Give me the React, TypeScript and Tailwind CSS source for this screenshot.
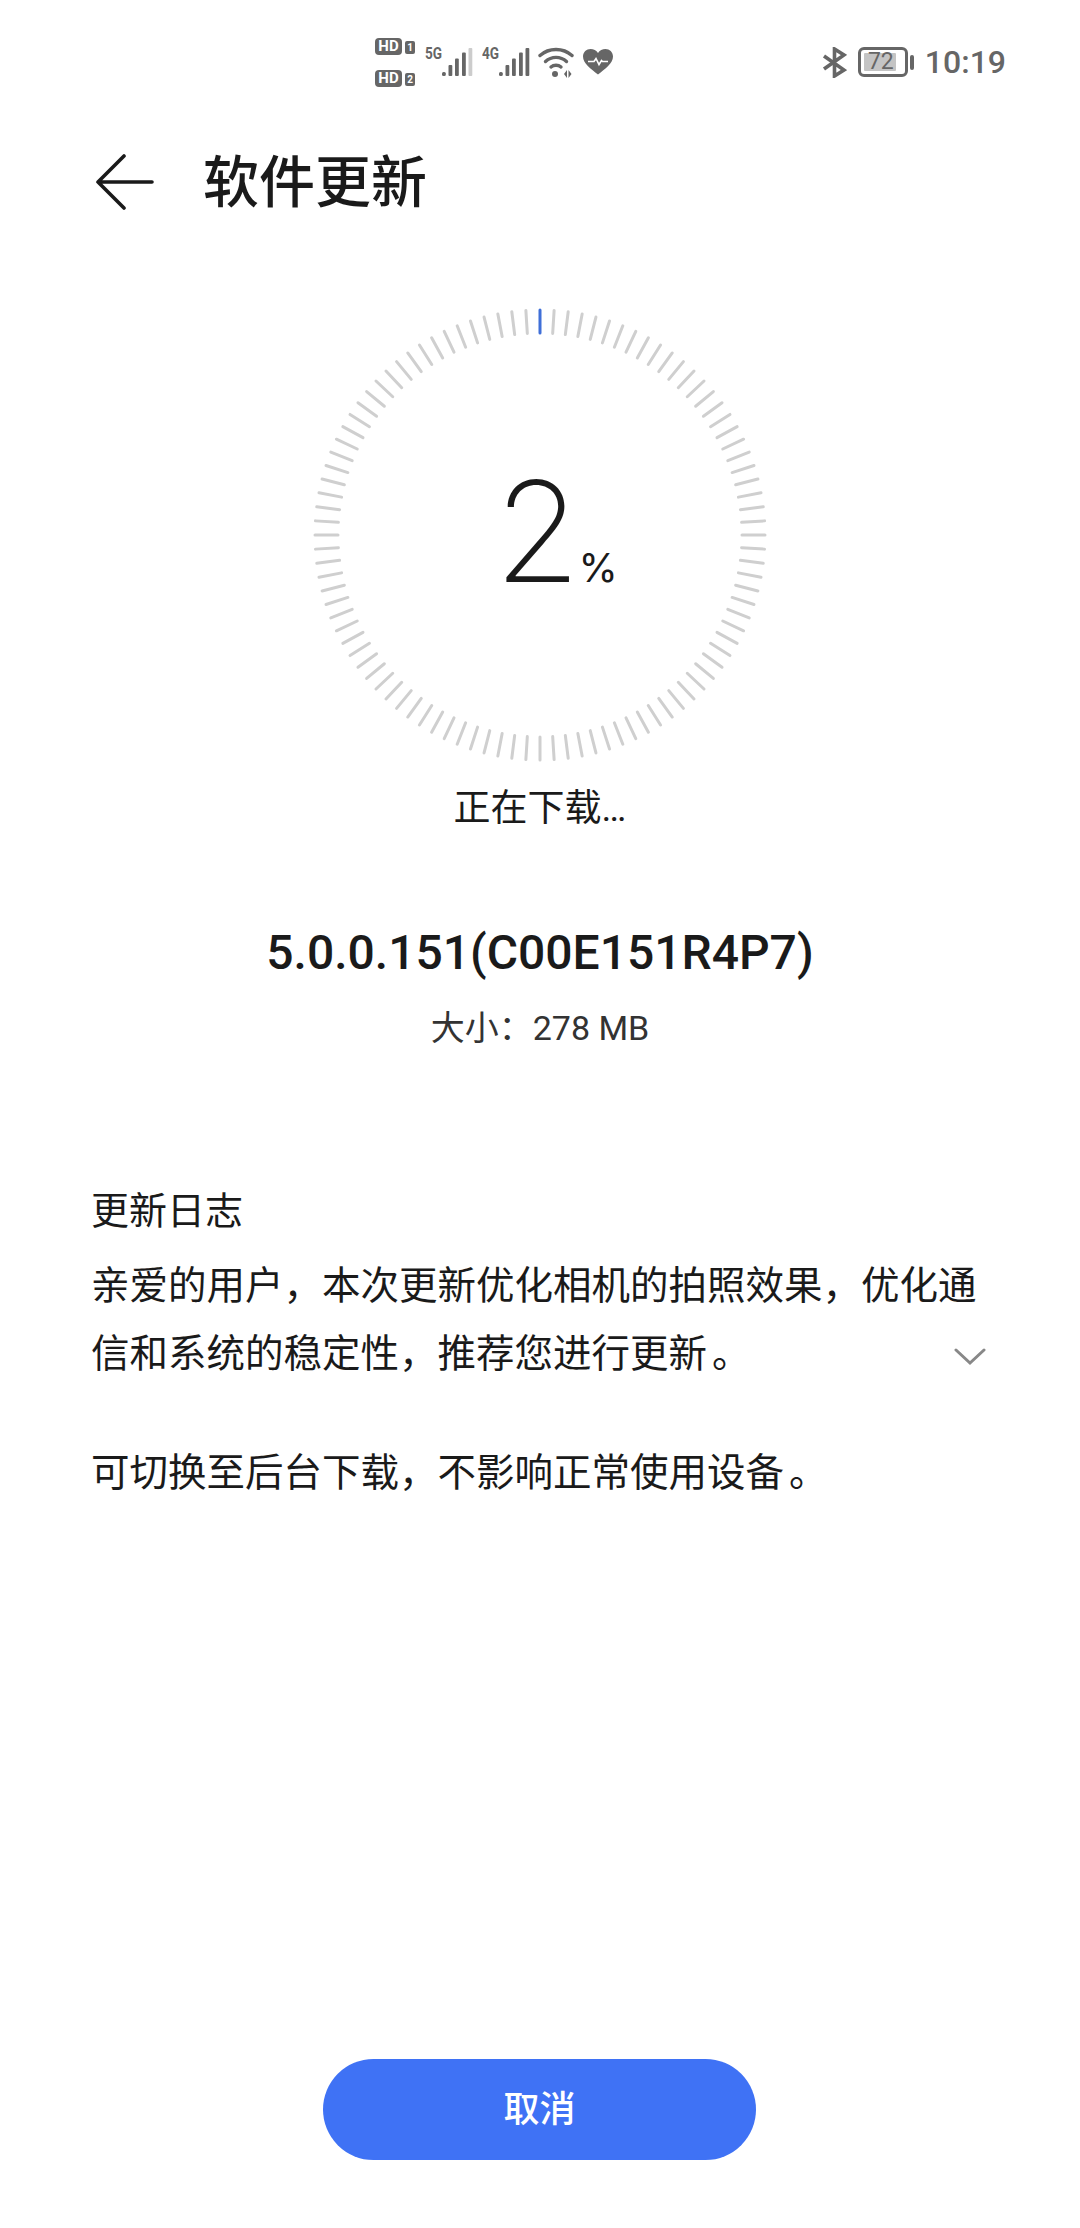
import React from "react";

const CJK = "font-['Roboto','Noto_Sans_CJK_SC',sans-serif]";

function HdBadge({ n }: { n: string }) {
  return (
    <div className="flex items-center gap-[3px] h-[17px]">
      <span className="w-[27px] h-[17px] rounded-[4px] bg-[#666] text-white text-[15px] leading-[17px] font-bold text-center">HD</span>
      <span className="w-[10px] h-[13px] mt-[3px] rounded-[2px] bg-[#666] text-white text-[10px] leading-[13px] font-bold text-center">{n}</span>
    </div>
  );
}

function Signal({ label, dim }: { label: string; dim?: boolean }) {
  return (
    <div className="flex items-start w-[49px] h-[30px]">
      <span className="w-[17px] mt-[-1px] text-[#666] text-[16px] leading-[16px] font-bold scale-x-[0.85] origin-left">{label}</span>
      <svg width="32" height="30" viewBox="0 0 32 30" className="ml-[-1px]">
        <rect x="1" y="25" width="3.8" height="4" rx="1.5" fill="#666" />
        <rect x="7.5" y="18" width="3.8" height="11" rx="1" fill="#666" />
        <rect x="14" y="11.5" width="3.8" height="17.5" rx="1" fill="#666" />
        <rect x="21" y="5.5" width="3.8" height="23.5" rx="1" fill="#666" />
        <rect x="27.5" y="1" width="3.8" height="28" rx="1" fill={dim ? "#ccc" : "#666"} />
      </svg>
    </div>
  );
}

function StatusBar() {
  return (
    <div className="flex items-center h-[62px] mt-[31px] text-[#666]">
      <div className="ml-[375px] flex flex-col gap-[15px]">
        <HdBadge n="1" />
        <HdBadge n="2" />
      </div>
      <div className="ml-[10px]"><Signal label="5G" dim /></div>
      <div className="ml-[8px]"><Signal label="4G" /></div>
      <svg width="36" height="32" viewBox="0 0 36 32" className="ml-[7px]" fill="none">
        <path d="M2 9.5C11 1.5 25 1.5 34 9.5" stroke="#666" strokeWidth="3.4" strokeLinecap="round" />
        <path d="M7.5 15.5C13.5 10 22.5 10 28.5 15.5" stroke="#666" strokeWidth="3.4" strokeLinecap="round" />
        <path d="M13 21C15.8 18.6 20.2 18.6 23 21" stroke="#666" strokeWidth="3.4" strokeLinecap="round" />
        <circle cx="17" cy="28" r="3" fill="#666" />
        <path d="M26 28l3-4v8zM30.5 24l3 4-3 4z" fill="#666" />
      </svg>
      <svg width="30" height="26" viewBox="0 0 30 26" className="ml-[9px]">
        <path d="M15 25.5C8 20 0 14.5 0 7.5 0 3 3.500 0 7.500 0 10.500 0 13.500 1.500 15 4 16.500 1.500 19.500 0 22.500 0 26.500 0 30 3 30 7.500 30 14.500 22 20 15 25.500Z" fill="#666" />
        <path d="M5 12.500h6l2-3 3 6 2.500-4 1 1H25" fill="none" stroke="#fff" strokeWidth="1.600" />
      </svg>
      <div className="ml-auto mr-[74px] flex items-center">
        <svg width="25" height="31" viewBox="0 0 25 31" fill="none" stroke="#666" strokeWidth="3.6">
          <path d="M2 9l20 14-9.500 6V2l9.500 6L2 22" />
        </svg>
        <div className="ml-[11px] w-[50px] h-[30px] rounded-[6px] border-[3px] border-[#666] p-[3px] relative">
          <div className="w-[32px] h-full bg-[#c4c4c4] rounded-[1px]" />
          <span className="absolute left-0 right-[4px] top-0 text-center text-[#666] text-[23px] leading-[24px]">72</span>
        </div>
        <div className="ml-[2px] w-[4px] h-[15px] bg-[#666] rounded-[2px]" />
        <span className="ml-[11px] text-[#666] text-[32px] leading-none font-medium">10:19</span>
      </div>
    </div>
  );
}

function Dial() {
  const ticks = Array.from({ length: 100 }, (_, i) => i);
  return (
    <div className="relative w-[454px] h-[454px] mt-[85px]">
      <svg width="454" height="454" viewBox="-227 -227 454 454">
        {ticks.map((i) => (
          <line
            key={i}
            x1="0"
            y1="-225"
            x2="0"
            y2="-202"
            stroke={i === 0 ? "#3f6fd8" : "#cfcfcf"}
            strokeWidth="3"
            strokeLinecap="round"
            transform={`rotate(${i * 3.6})`}
          />
        ))}
      </svg>
      <div className="absolute inset-0 flex items-center justify-center">
        <div className="flex items-baseline translate-x-[16px] translate-y-[-4px] font-['Inter',sans-serif] text-[#1a1a1a]">
          <span className="text-[140px] leading-none font-[250]">2</span>
          <span className="ml-[-2px] text-[40px] leading-none font-normal">%</span>
        </div>
      </div>
    </div>
  );
}

export default function App() {
  return (
    <div className={`w-[1080px] h-[2228px] bg-white flex flex-col ${CJK} text-[#1a1a1a]`}>
      <StatusBar />

      {/* Header */}
      <div className="flex items-center h-[80px] mt-[50px] pl-[96px]">
        <svg width="58" height="58" viewBox="0 0 58 58" fill="none" stroke="#1a1a1a" strokeWidth="3.6" strokeLinecap="round" strokeLinejoin="round">
          <path d="M28 2L2 28l26 26M2 28h54" />
        </svg>
        <h1 className="ml-[49px] text-[56px] leading-none font-medium">软件更新</h1>
      </div>

      <div className="flex flex-col items-center">
        <Dial />
        <p className="mt-[22px] text-[37px] leading-[50px]">正在下载…</p>
        <p className="mt-[89px] text-[48px] leading-[60px] font-medium">5.0.0.151(C00E151R4P7)</p>
        <p className="mt-[22px] text-[34px] leading-[46px] text-[#333]">大小：278 MB</p>
      </div>

      {/* Changelog */}
      <div className="mt-[133px] px-[91px]">
        <h2 className="text-[38px] leading-[54px]">更新日志</h2>
        <p className="mt-[14px] text-[38.5px] leading-[68px] whitespace-nowrap">亲爱的用户，本次更新优化相机的拍照效果，优化通</p>
        <div className="flex items-center justify-between">
          <p className="text-[38.5px] leading-[68px]">信和系统的稳定性，推荐您进行更新<span className="inline-block translate-x-[5px]">。</span></p>
          <svg width="32" height="18" viewBox="0 0 32 18" fill="none" stroke="#888" strokeWidth="3" strokeLinecap="round" className="mr-[3px] mt-[6px]">
            <path d="M2 2l14 13L30 2" />
          </svg>
        </div>
        <p className="mt-[51px] text-[38.5px] leading-[68px]">可切换至后台下载，不影响正常使用设备<span className="inline-block translate-x-[5px]">。</span></p>
      </div>

      <div className="mt-auto mb-[68px] pr-[1px] flex justify-center">
        <button className="w-[433px] h-[101px] rounded-full bg-[#3f72f5] text-white text-[36px] font-medium">取消</button>
      </div>
    </div>
  );
}
